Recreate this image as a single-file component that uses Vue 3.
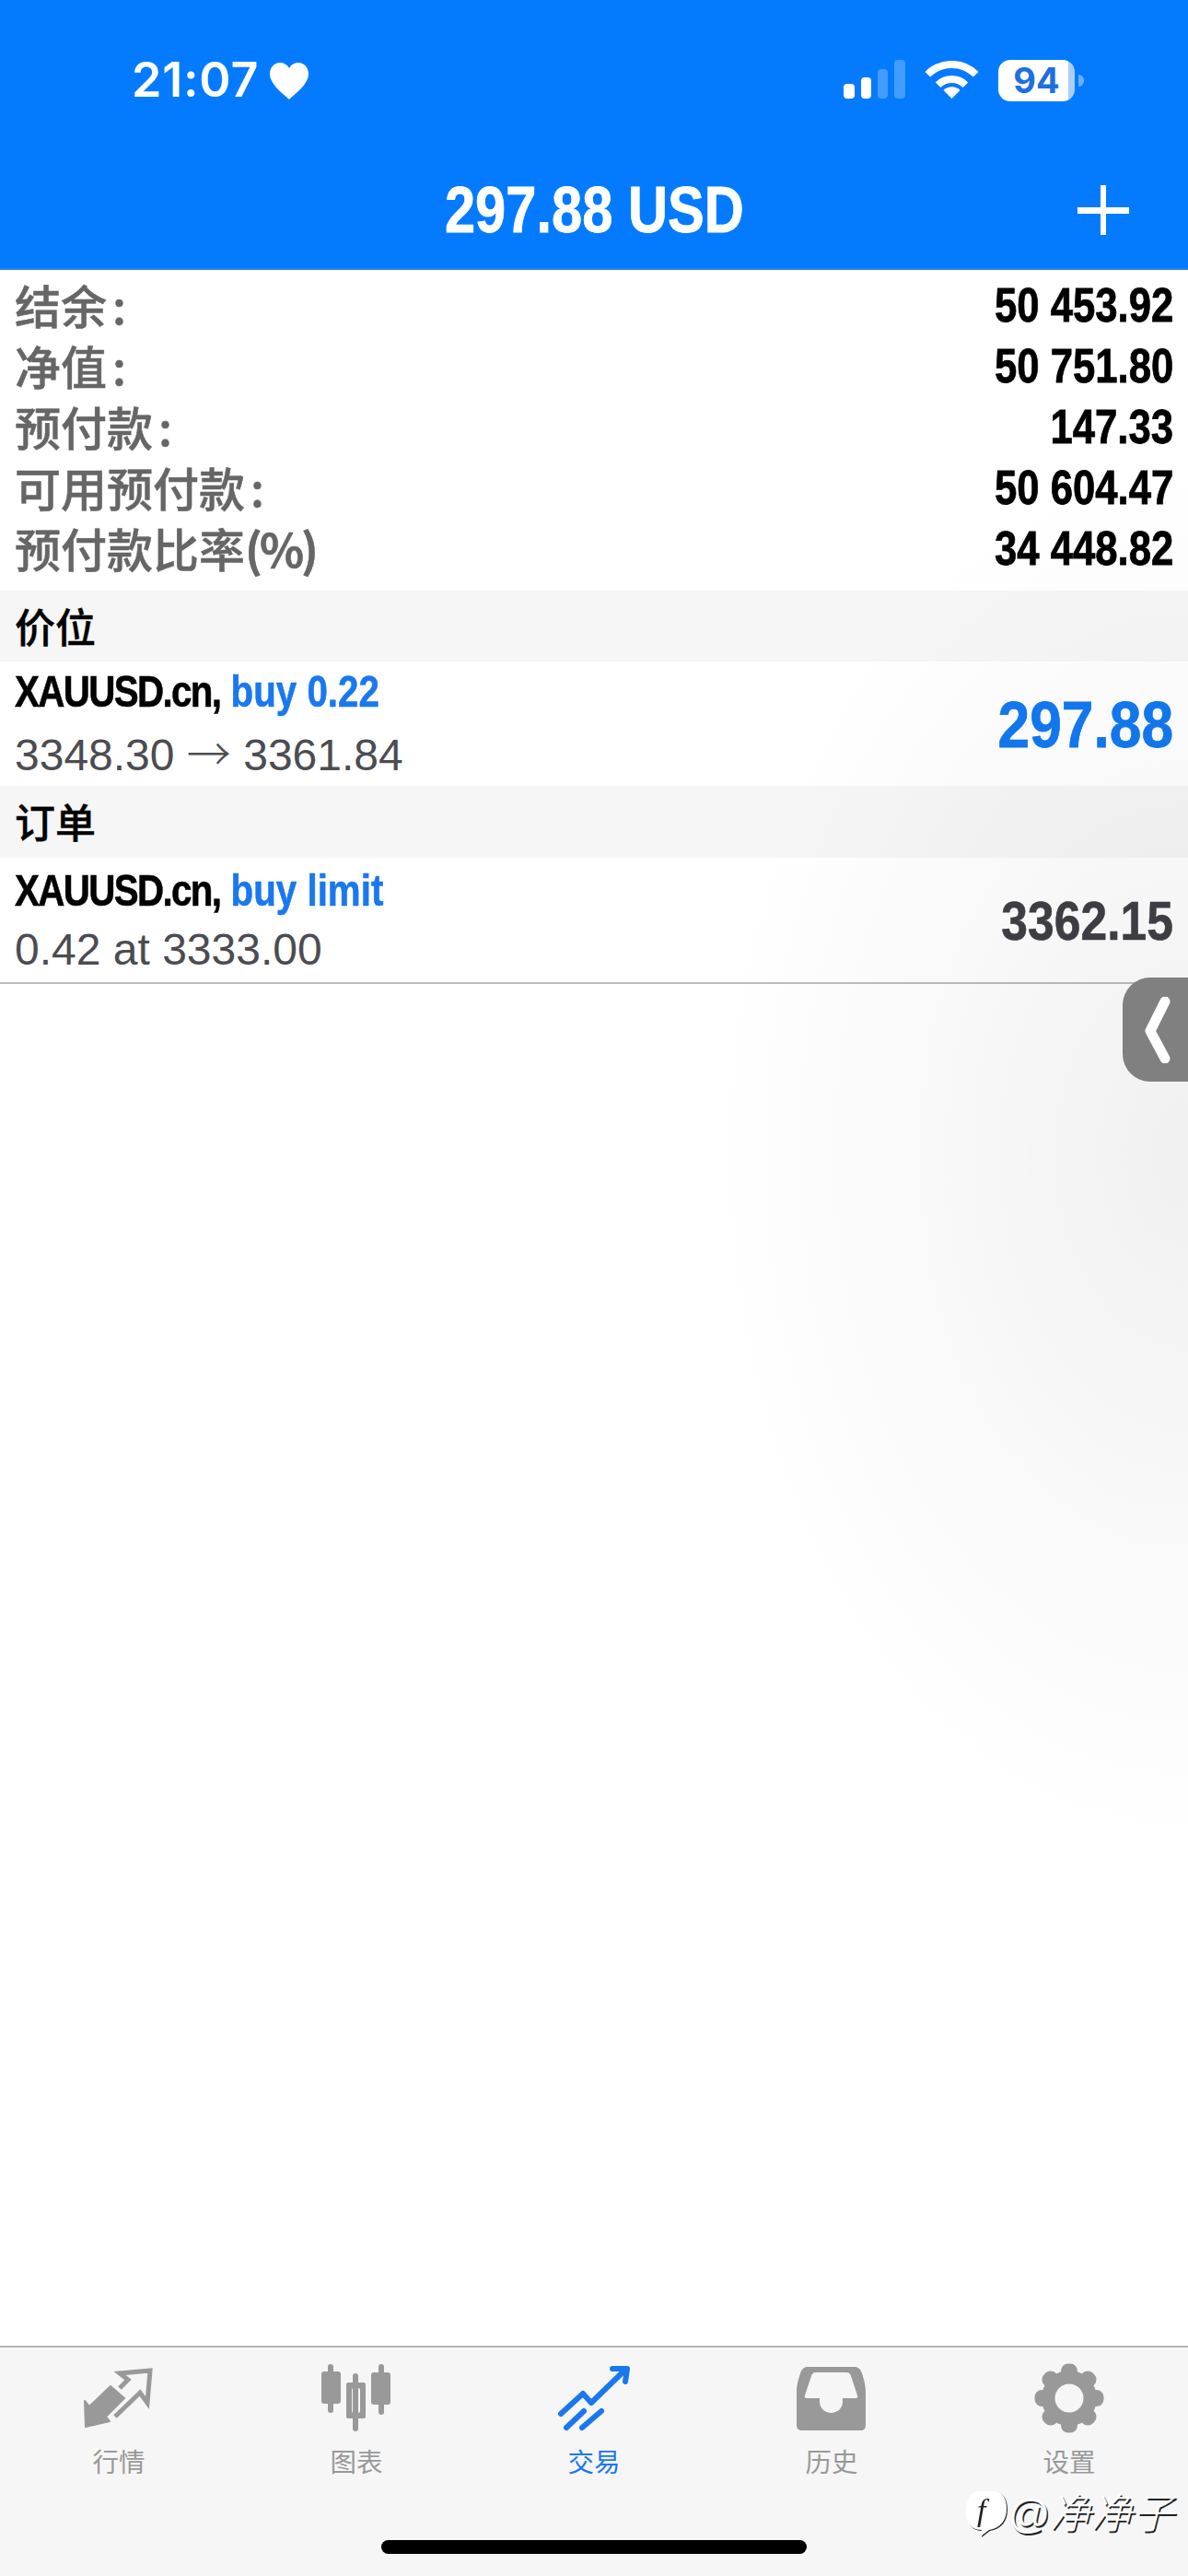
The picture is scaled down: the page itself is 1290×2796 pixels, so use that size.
<script setup>
// account summary rows
const summary = [
  { label: '结余', colon: true, value: '50 453.92' },
  { label: '净值', colon: true, value: '50 751.80' },
  { label: '预付款', colon: true, value: '147.33' },
  { label: '可用预付款', colon: true, value: '50 604.47' },
  { label: '预付款比率', suffix: '(%)', value: '34 448.82' }
]

const gearTeeth = [0, 45, 90, 135, 180, 225, 270, 315]
</script>

<template>
  <div class="screen">
    <header class="header">
      <div class="status">
        <div class="status-left">
          <span class="time">21:07</span>
          <svg class="heart" width="42" height="40" viewBox="0 0 42 40">
            <path d="M21 40C15 34 0 24 0 12 0 5 5 0 11 0c4.500 0 8 2.500 10 6 2-3.500 5.500-6 10-6 6 0 11 5 11 12 0 12-15 22-21 28z" fill="#fff" />
          </svg>
        </div>
        <div class="status-right">
          <svg width="67" height="42" viewBox="0 0 67 42">
            <rect x="0" y="26" width="12" height="16" rx="4" fill="#fff" />
            <rect x="19" y="19" width="11" height="23" rx="4" fill="#fff" />
            <rect x="37" y="10" width="11" height="32" rx="4" fill="#fff" opacity=".25" />
            <rect x="55" y="0" width="12" height="42" rx="4" fill="#fff" opacity=".25" />
          </svg>
          <svg width="59" height="41" viewBox="0 0 59 41" fill="none">
            <path d="M3.300 14.800A37 37 0 0 1 55.700 14.800" stroke="#fff" stroke-width="8" />
            <path d="M14.600 26.200A21 21 0 0 1 44.400 26.200" stroke="#fff" stroke-width="8" />
            <path d="M29.500 41L20.500 32A12.700 12.700 0 0 1 38.500 32Z" fill="#fff" />
          </svg>
          <div class="battery">94</div>
        </div>
      </div>
      <div class="title-row">
        <span></span>
        <h1 class="title">297.88 USD</h1>
        <svg class="plus" width="56" height="54" viewBox="0 0 56 54">
          <rect x="25" y="0" width="6" height="54" fill="#fff" />
          <rect x="0" y="24" width="56" height="7" fill="#fff" />
        </svg>
      </div>
    </header>

    <main class="content">
      <section class="summary">
        <div v-for="row in summary" :key="row.label" class="summary-row">
          <span class="summary-label">{{ row.label }}<span v-if="row.colon" class="colon">:</span><span v-if="row.suffix" class="suffix">{{ row.suffix }}</span></span>
          <span class="summary-value">{{ row.value }}</span>
        </div>
      </section>

      <div class="section-head">价位</div>
      <div class="trade-row">
        <div>
          <div class="trade-name"><span class="symbol">XAUUSD.cn,</span> <span class="blue">buy 0.22</span></div>
          <div class="trade-sub">3348.30 <span class="arrow">→</span> 3361.84</div>
        </div>
        <div class="profit">297.88</div>
      </div>

      <div class="section-head section-head-tall">订单</div>
      <div class="trade-row trade-row-last">
        <div>
          <div class="trade-name"><span class="symbol">XAUUSD.cn,</span> <span class="blue">buy limit</span></div>
          <div class="trade-sub">0.42 at 3333.00</div>
        </div>
        <div class="price">3362.15</div>
      </div>

      <div class="shade"></div>
      <div class="handle">
        <svg width="30" height="72" viewBox="0 0 30 72" fill="none">
          <path d="M23 5L7 37 23 67" stroke="#fff" stroke-width="11" stroke-linecap="round" stroke-linejoin="round" />
        </svg>
      </div>
    </main>

    <footer class="tabbar">
      <nav class="tabs">
        <div class="tab">
          <svg width="90" height="80" viewBox="0 0 90 80" fill="none">
            <path d="M36 26L51 39 31 59 35 64 9 70 8 42 13 48Z" fill="#999" stroke="#999" stroke-width="2" stroke-linejoin="round" />
            <path d="M46 28L55 19 46 12 79 9 76 44 68 33 41 59" stroke="#999" stroke-width="5" />
          </svg>
          <span class="tab-label">行情</span>
        </div>
        <div class="tab">
          <svg width="90" height="80" viewBox="0 0 90 80">
            <g fill="#999">
              <rect x="14" y="2" width="6" height="53" rx="3" />
              <rect x="7" y="10" width="21" height="35" rx="3" />
              <rect x="41" y="12" width="6" height="63" rx="3" />
              <path fill-rule="evenodd" d="M36 22H53a2 2 0 0 1 2 2V59a2 2 0 0 1-2 2H36a2 2 0 0 1-2-2V24a2 2 0 0 1 2-2zM42 28a2 2 0 0 0-2 2V53a2 2 0 0 0 2 2h5a2 2 0 0 0 2-2V30a2 2 0 0 0-2-2z" />
              <rect x="69" y="2" width="6" height="55" rx="3" />
              <rect x="61" y="11" width="21" height="35" rx="3" />
            </g>
          </svg>
          <span class="tab-label">图表</span>
        </div>
        <div class="tab tab-active">
          <svg width="90" height="80" viewBox="0 0 90 80" fill="none" stroke="#1a78ee" stroke-width="6" stroke-linecap="round" stroke-linejoin="round">
            <path d="M9 56L33 34 42 44 78 9" />
            <path d="M65 7H81L79 21" />
            <path d="M15 71L34 53" />
            <path d="M32 71L53 53" />
          </svg>
          <span class="tab-label">交易</span>
        </div>
        <div class="tab">
          <svg width="90" height="80" viewBox="0 0 90 80">
            <path fill="#999" fill-rule="evenodd" d="M19 5H70C74 5 76 7 78 12 80 19 82 24 82 33V68C82 72 80 74 76 74H13C9 74 7 72 7 68V33C7 24 9 19 11 12 13 7 15 5 19 5zM28 11C25 11 24 12 23 15L16 36C15 38 16 39 18 39H32V43C32 50 38 55 44.500 55 51 55 57 50 57 43V39H71C73 39 74 38 73 36L66 15C65 12 64 11 61 11z" />
          </svg>
          <span class="tab-label">历史</span>
        </div>
        <div class="tab">
          <svg width="90" height="80" viewBox="0 0 90 80">
            <g fill="#999" transform="translate(45 39)">
              <circle r="30" />
              <rect v-for="a in gearTeeth" :key="a" x="-9" y="-37.500" width="18" height="20" rx="8" :transform="`rotate(${a})`" />
            </g>
            <circle cx="45" cy="39" r="15.500" fill="#f6f6f6" />
          </svg>
          <span class="tab-label">设置</span>
        </div>
      </nav>
      <div class="home-bar"></div>

      <div class="watermark">
        <svg class="wm-logo" width="46" height="52" viewBox="0 0 46 52">
          <path d="M16 1H30C40 1 45 8 45 20 45 33 38 41 26 43L17 50 18 43C7 43 1 36 1 24 1 10 6 1 16 1Z" fill="#fff" />
          <text x="13" y="33" font-size="34" font-style="italic" fill="#222" font-family="Liberation Serif, serif">f</text>
        </svg>
        <span class="wm-text">@净净子</span>
      </div>
    </footer>
  </div>
</template>

<style scoped>
.screen {
  position: relative;
  display: flex;
  flex-direction: column;
  width: 1290px;
  height: 2796px;
  overflow: hidden;
  background: #fff;
  font-family: "Liberation Sans", "Noto Sans CJK SC", sans-serif;
}

/* --- header --- */
.header {
  height: 293px;
  box-sizing: border-box;
  padding-top: 64px;
  background: #047bff;
  border-bottom: 2px solid #2a7fe6;
  color: #fff;
}

.status {
  display: flex;
  justify-content: space-between;
  height: 46px;
  padding: 0 113px 0 143px;
}

.status-left {
  display: flex;
  align-items: center;
  gap: 12px;
}

.time {
  font-family: "Inter", "Liberation Sans", sans-serif;
  font-size: 52px;
  font-weight: 600;
  line-height: 46px;
  letter-spacing: 0.8px;
}

.heart {
  margin-top: 2px;
}

.status-right {
  display: flex;
  align-items: flex-end;
  gap: 21px;
}

.status-right svg {
  margin-bottom: 3px;
}

.battery {
  position: relative;
  width: 83px;
  height: 45px;
  margin-right: 10px;
  border-radius: 13px;
  background: linear-gradient(90deg, #fff 92%, #a9cfff 92%);
  color: #1f6fe0;
  font-family: "Inter", "Liberation Sans", sans-serif;
  font-size: 38px;
  font-weight: 700;
  line-height: 45px;
  text-align: center;
}

.battery::after {
  content: "";
  position: absolute;
  left: 87px;
  top: 16px;
  width: 6px;
  height: 13px;
  border-radius: 0 6px 6px 0;
  background: rgba(255, 255, 255, 0.4);
}

.title-row {
  display: grid;
  grid-template-columns: 1fr auto 1fr;
  align-items: center;
  height: 80px;
  margin-top: 78px;
}

.title {
  margin: 0;
  font-size: 71px;
  font-weight: 700;
  line-height: 80px;
  white-space: nowrap;
  -webkit-text-stroke: 0.8px #fff;
  transform: scaleX(0.84);
}

.plus {
  justify-self: end;
  margin-right: 64px;
}

/* --- list --- */
.content {
  position: relative;
  flex: 1;
}

.summary {
  padding: 5px 16px 13px;
}

.summary-row {
  display: flex;
  justify-content: space-between;
  align-items: center;
  height: 66px;
}

.summary-label {
  padding-bottom: 3px;
  color: #666;
  font-family: "Noto Sans CJK SC", sans-serif;
  font-size: 50px;
  font-weight: 500;
  line-height: 62px;
  -webkit-text-stroke: 0.5px #666;
}

.colon {
  margin-left: 6px;
}

.suffix {
  font-weight: 700;
  letter-spacing: -3px;
}

.summary-value {
  color: #000;
  font-size: 52px;
  font-weight: 700;
  line-height: 66px;
  white-space: nowrap;
  -webkit-text-stroke: 0.8px #000;
  transform: scaleX(0.84);
  transform-origin: right center;
}

.section-head {
  height: 77px;
  padding-left: 16px;
  background: #f6f6f6;
  color: #000;
  font-family: "Noto Sans CJK SC", sans-serif;
  font-size: 44px;
  font-weight: 500;
  line-height: 77px;
  -webkit-text-stroke: 0.4px #000;
}

.section-head-tall {
  height: 78px;
}

.trade-row {
  display: flex;
  justify-content: space-between;
  align-items: center;
  box-sizing: border-box;
  height: 135px;
  padding: 0 16px;
}

.trade-row-last {
  height: 137px;
  border-bottom: 2px solid #bdbdbd;
}

.trade-name {
  color: #000;
  font-size: 48px;
  font-weight: 700;
  line-height: 64px;
  white-space: nowrap;
  -webkit-text-stroke: 0.6px currentColor;
  transform: scaleX(0.84);
  transform-origin: left center;
}

.symbol {
  letter-spacing: -1.95px;
}

.blue {
  color: #1a78ee;
}

.trade-sub {
  color: #4c4c52;
  font-size: 48px;
  line-height: 64px;
  white-space: nowrap;
}

.arrow {
  font-family: "Noto Sans CJK SC", sans-serif;
  font-weight: 300;
}

.profit {
  padding-top: 2px;
  color: #1278f0;
  font-size: 70px;
  font-weight: 700;
  line-height: 80px;
  -webkit-text-stroke: 0.8px #1278f0;
  transform: scaleX(0.89);
  transform-origin: right center;
}

.price {
  padding-top: 2px;
  color: #3f3f45;
  font-size: 60px;
  font-weight: 700;
  line-height: 70px;
  -webkit-text-stroke: 0.6px #3f3f45;
  transform: scaleX(0.86);
  transform-origin: right center;
}

/* soft light-gray glow on the right side of the photo */
.shade {
  position: absolute;
  inset: 0;
  background: radial-gradient(ellipse 520px 760px at 1290px 960px, rgba(0, 0, 0, 0.06), rgba(0, 0, 0, 0.025) 55%, rgba(0, 0, 0, 0) 100%);
  pointer-events: none;
}

.handle {
  position: absolute;
  top: 768px;
  right: 0;
  display: flex;
  align-items: center;
  justify-content: flex-end;
  box-sizing: border-box;
  width: 71px;
  height: 113px;
  padding-right: 18px;
  border-radius: 30px 0 0 30px;
  background: #808080;
}

/* --- tab bar --- */
.tabbar {
  position: relative;
  display: flex;
  flex-direction: column;
  box-sizing: border-box;
  height: 250px;
  padding-top: 16px;
  border-top: 2px solid #b4b4b4;
  background: #f6f6f6;
}

.tabs {
  display: grid;
  grid-template-columns: repeat(5, 1fr);
}

.tab {
  display: flex;
  flex-direction: column;
  align-items: center;
  gap: 10px;
  color: #999;
}

.tab-active {
  color: #1a78ee;
}

.tab-label {
  font-family: "Noto Sans CJK SC", sans-serif;
  font-size: 28.500px;
  line-height: 34px;
}

.home-bar {
  align-self: center;
  width: 462px;
  height: 15px;
  margin-top: 69px;
  border-radius: 8px;
  background: #000;
}

.watermark {
  position: absolute;
  top: 155px;
  left: 1048px;
  display: flex;
  align-items: center;
  gap: 0;
}

.wm-logo {
  filter: drop-shadow(1.5px 1.5px 0 #222);
}

.wm-text {
  color: #fff;
  font-family: "Liberation Sans", "Noto Sans CJK SC", sans-serif;
  font-size: 45px;
  font-style: italic;
  font-weight: 300;
  line-height: 52px;
  white-space: nowrap;
  text-shadow: 1.5px 1.5px 0 #222;
}
</style>
